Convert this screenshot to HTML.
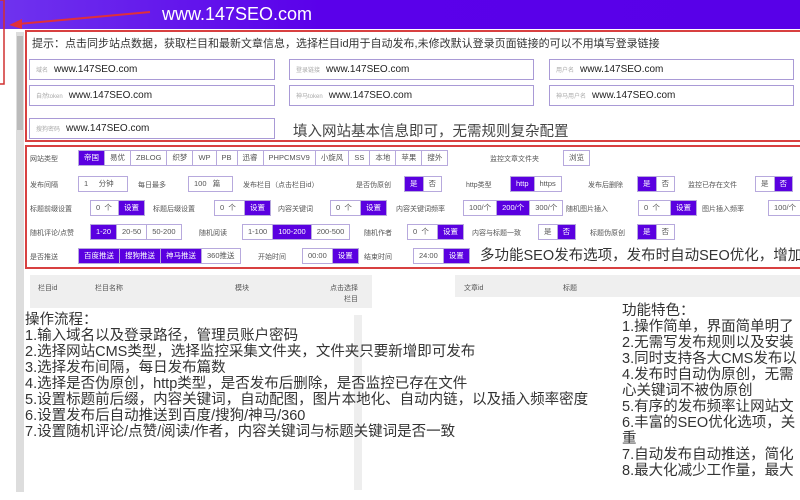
<!DOCTYPE html>
<html><head><meta charset="utf-8"><style>
*{margin:0;padding:0;box-sizing:border-box}
body{width:800px;height:500px;overflow:hidden;background:#fff;font-family:"Liberation Sans","Noto Sans CJK SC",sans-serif;position:relative;color:#333}
.a{position:absolute;white-space:nowrap}
.hdr{left:0;top:0;width:800px;height:29px;background:linear-gradient(90deg,#6f33ee,#5a00ea 40%,#5800e8)}
.inp{position:absolute;height:21px;border:1px solid #a99ad6;background:#fff;font-size:10px;line-height:19px;padding-left:6px;color:#222}
.inp small{font-size:6px;color:#aaa;margin-right:6px}
.lb{position:absolute;font-size:7px;color:#555;white-space:nowrap}
.g{position:absolute;display:flex;height:16px;border:1px solid #b7a9dd;font-size:7.5px;white-space:nowrap}
.g span{padding:0 5px;line-height:14px;border-right:1px solid #b7a9dd;color:#555;background:#fff}
.g span:last-child{border-right:none}
.g .on{background:#5a00e0;color:#fff}
.big{font-size:14.5px;color:#333}
.big div{height:16px;line-height:16px;overflow:visible}
</style></head><body>
<div class="a hdr"></div>
<div class="a" style="left:162px;top:4px;font-size:18px;color:#fff">www.147SEO.com</div>
<svg class="a" style="left:0;top:0" width="160" height="90"><line x1="150" y1="12" x2="18" y2="24" stroke="#e0303a" stroke-width="2"/><polygon points="9,25 22,19 22,29" fill="#e0303a"/><rect x="-2" y="0" width="6" height="84" fill="none" stroke="#d03030" stroke-width="1.5"/></svg>
<div class="a" style="left:16px;top:32px;width:8px;height:460px;background:#ddd"></div>
<div class="a" style="left:17px;top:36px;width:6px;height:94px;background:#bbb"></div>
<div class="a" style="left:25px;top:30px;width:790px;height:112px;border:2px solid #d84040"></div>
<div class="a" style="left:32px;top:35px;font-size:11px;color:#333">提示：点击同步站点数据，获取栏目和最新文章信息，选择栏目id用于自动发布,未修改默认登录页面链接的可以不用填写登录链接</div>
<div class="inp" style="left:29px;top:59px;width:246px"><small>域名</small>www.147SEO.com</div>
<div class="inp" style="left:289px;top:59px;width:245px"><small>登录链接</small>www.147SEO.com</div>
<div class="inp" style="left:549px;top:59px;width:245px"><small>用户名</small>www.147SEO.com</div>
<div class="inp" style="left:29px;top:85px;width:246px"><small>自然token</small>www.147SEO.com</div>
<div class="inp" style="left:289px;top:85px;width:245px"><small>神马token</small>www.147SEO.com</div>
<div class="inp" style="left:549px;top:85px;width:245px"><small>神马用户名</small>www.147SEO.com</div>
<div class="inp" style="left:29px;top:118px;width:246px"><small>搜狗密码</small>www.147SEO.com</div>
<div class="a" style="left:293px;top:120px;font-size:14.5px;color:#444">填入网站基本信息即可，无需规则复杂配置</div>
<div class="a" style="left:25px;top:145px;width:790px;height:124px;border:2px solid #d84040"></div>
<div class="lb" style="left:30px;top:154px">网站类型</div>
<div class="g" style="left:78px;top:150px"><span class="on">帝国</span><span>易优</span><span>ZBLOG</span><span>织梦</span><span>WP</span><span>PB</span><span>迅睿</span><span>PHPCMSV9</span><span>小旋风</span><span>SS</span><span>本地</span><span>苹果</span><span>搜外</span></div>
<div class="lb" style="left:490px;top:154px">监控文章文件夹</div>
<div class="g" style="left:563px;top:150px"><span>浏览</span></div>
<div class="lb" style="left:30px;top:180px">发布间隔</div>
<div class="g" style="left:78px;top:176px;width:50px"><span style="flex:1">1 &nbsp; &nbsp; 分钟</span></div>
<div class="lb" style="left:138px;top:180px">每日最多</div>
<div class="g" style="left:188px;top:176px;width:45px"><span style="flex:1">100 &nbsp; 篇</span></div>
<div class="lb" style="left:243px;top:180px">发布栏目（点击栏目id）</div>
<div class="lb" style="left:356px;top:180px">是否伪原创</div>
<div class="g" style="left:404px;top:176px"><span class="on">是</span><span>否</span></div>
<div class="lb" style="left:466px;top:180px">http类型</div>
<div class="g" style="left:510px;top:176px"><span class="on">http</span><span>https</span></div>
<div class="lb" style="left:588px;top:180px">发布后删除</div>
<div class="g" style="left:637px;top:176px"><span class="on">是</span><span>否</span></div>
<div class="lb" style="left:688px;top:180px">监控已存在文件</div>
<div class="g" style="left:755px;top:176px"><span>是</span><span class="on">否</span></div>
<div class="lb" style="left:30px;top:204px">标题前缀设置</div>
<div class="g" style="left:90px;top:200px"><span style="width:28px">0 &nbsp;个</span><span class="on">设置</span></div>
<div class="lb" style="left:153px;top:204px">标题后缀设置</div>
<div class="g" style="left:214px;top:200px"><span style="width:30px">0 &nbsp;个</span><span class="on">设置</span></div>
<div class="lb" style="left:278px;top:204px">内容关键词</div>
<div class="g" style="left:330px;top:200px"><span style="width:30px">0 &nbsp;个</span><span class="on">设置</span></div>
<div class="lb" style="left:396px;top:204px">内容关键词频率</div>
<div class="g" style="left:463px;top:200px"><span>100/个</span><span class="on">200/个</span><span>300/个</span></div>
<div class="lb" style="left:566px;top:204px">随机图片插入</div>
<div class="g" style="left:638px;top:200px"><span style="width:32px">0 &nbsp;个</span><span class="on">设置</span></div>
<div class="lb" style="left:702px;top:204px">图片插入频率</div>
<div class="g" style="left:768px;top:200px"><span>100/个</span></div>
<div class="lb" style="left:30px;top:228px">随机评论/点赞</div>
<div class="g" style="left:90px;top:224px"><span class="on">1-20</span><span>20-50</span><span>50-200</span></div>
<div class="lb" style="left:199px;top:228px">随机阅读</div>
<div class="g" style="left:242px;top:224px"><span>1-100</span><span class="on">100-200</span><span>200-500</span></div>
<div class="lb" style="left:364px;top:228px">随机作者</div>
<div class="g" style="left:407px;top:224px"><span style="width:30px">0 &nbsp;个</span><span class="on">设置</span></div>
<div class="lb" style="left:472px;top:228px">内容与标题一致</div>
<div class="g" style="left:538px;top:224px"><span>是</span><span class="on">否</span></div>
<div class="lb" style="left:590px;top:228px">标题伪原创</div>
<div class="g" style="left:637px;top:224px"><span class="on">是</span><span>否</span></div>
<div class="lb" style="left:30px;top:252px">是否推送</div>
<div class="g" style="left:78px;top:248px"><span class="on">百度推送</span><span class="on">搜狗推送</span><span class="on">神马推送</span><span>360推送</span></div>
<div class="lb" style="left:258px;top:252px">开始时间</div>
<div class="g" style="left:302px;top:248px"><span>00:00</span><span class="on">设置</span></div>
<div class="lb" style="left:364px;top:252px">结束时间</div>
<div class="g" style="left:413px;top:248px"><span>24:00</span><span class="on">设置</span></div>
<div class="a" style="left:480px;top:244px;font-size:14.5px;color:#333">多功能SEO发布选项，发布时自动SEO优化，增加</div>
<div class="a" style="left:30px;top:275px;width:342px;height:33px;background:#efefef"></div>
<div class="lb" style="left:38px;top:283px">栏目id</div>
<div class="lb" style="left:95px;top:283px">栏目名称</div>
<div class="lb" style="left:235px;top:283px">模块</div>
<div class="lb" style="left:330px;top:283px;text-align:right;line-height:11px">点击选择<br>&nbsp; &nbsp; &nbsp; 栏目</div>
<div class="a" style="left:455px;top:275px;width:345px;height:22px;background:#efefef"></div>
<div class="lb" style="left:464px;top:283px">文章id</div>
<div class="lb" style="left:563px;top:283px">标题</div>
<div class="a" style="left:354px;top:315px;width:8px;height:175px;background:#eee"></div>
<div class="a big" style="left:25px;top:312px"><div>操作流程：</div><div>1.输入域名以及登录路径，管理员账户密码</div><div>2.选择网站CMS类型，选择监控采集文件夹，文件夹只要新增即可发布</div><div>3.选择发布间隔，每日发布篇数</div><div>4.选择是否伪原创，http类型，是否发布后删除，是否监控已存在文件</div><div>5.设置标题前后缀，内容关键词，自动配图，图片本地化、自动内链，以及插入频率密度</div><div>6.设置发布后自动推送到百度/搜狗/神马/360</div><div>7.设置随机评论/点赞/阅读/作者，内容关键词与标题关键词是否一致</div></div>
<div class="a big" style="left:622px;top:303px"><div>功能特色：</div><div>1.操作简单，界面简单明了</div><div>2.无需写发布规则以及安装</div><div>3.同时支持各大CMS发布以</div><div>4.发布时自动伪原创，无需</div><div>心关键词不被伪原创</div><div>5.有序的发布频率让网站文</div><div>6.丰富的SEO优化选项，关</div><div>重</div><div>7.自动发布自动推送，简化</div><div>8.最大化减少工作量，最大</div></div>
</body></html>
